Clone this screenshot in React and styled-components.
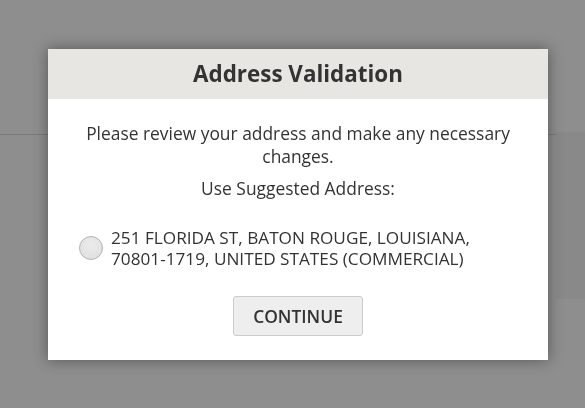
import React, { useState } from "react";
import styled, { createGlobalStyle } from "styled-components";

const GlobalStyle = createGlobalStyle`
  html, body {
    margin: 0;
    padding: 0;
    background: #8e8e8e;
    font-family: "Open Sans", "Liberation Sans", Arial, sans-serif;
    color: #333;
  }
`;

const Page = styled.div`
  height: 408px;
  padding-top: 132px;
  box-sizing: border-box;
  display: flex;
  align-items: flex-start;
  justify-content: flex-end;
  position: relative;
  &::before {
    content: "";
    position: absolute;
    left: 0;
    right: 29px;
    top: 134px;
    height: 1px;
    background: #7a7a7a;
  }
`;

const SidePanel = styled.div`
  width: 29px;
  height: 167px;
  background: #898989;
`;

const Overlay = styled.div`
  position: fixed;
  inset: 0;
  padding: 49px 0 0 48px;
`;

const Modal = styled.div`
  width: 500px;
  background: #fff;
  box-shadow: 0 0 14px rgba(0, 0, 0, 0.4);
`;

const Header = styled.div`
  height: 50px;
  background: #e8e6e2;
  display: flex;
  align-items: center;
  justify-content: center;
`;

const Title = styled.h2`
  margin: 0;
  font-size: 22.4px;
  font-weight: 700;
  color: #333;
  line-height: 1;
`;

const Body = styled.div`
  padding: 23px 20px 24px;
  display: flex;
  flex-direction: column;
  align-items: center;
`;

const Text = styled.p`
  margin: 0 0 ${(p) => p.$gap || 0}px;
  font-size: 17.4px;
  line-height: 23px;
  text-align: center;
  color: #333;
  white-space: nowrap;
`;

const Option = styled.label`
  align-self: stretch;
  display: flex;
  align-items: center;
  gap: 8px;
  padding-left: 11px;
  margin-bottom: 27px;
  cursor: pointer;
`;

const Radio = styled.span`
  flex: none;
  width: 22px;
  height: 22px;
  border-radius: 50%;
  border: 1px solid #b3b3b3;
  background: radial-gradient(circle at 50% 35%, #ececec 0%, #dddddd 100%);
  display: flex;
  align-items: center;
  justify-content: center;
  &::after {
    content: "";
    width: 10px;
    height: 10px;
    border-radius: 50%;
    background: ${(p) => (p.$checked ? "#555" : "transparent")};
  }
`;

const Address = styled.span`
  font-size: 17.2px;
  line-height: 21px;
  color: #333;
  white-space: nowrap;
`;

const Button = styled.button`
  width: 130px;
  height: 40px;
  background: #eeeeee;
  border: 1px solid #cccccc;
  border-radius: 3px;
  font-family: inherit;
  font-size: 17.4px;
  font-weight: 600;
  color: #333;
  cursor: pointer;
`;

export default function App() {
  const [checked, setChecked] = useState(false);

  return (
    <>
      <GlobalStyle />
      <Page>
        <SidePanel />
      </Page>
      <Overlay>
        <Modal>
          <Header>
            <Title>Address Validation</Title>
          </Header>
          <Body>
            <Text $gap={9}>
              Please review your address and make any necessary
              <br />
              changes.
            </Text>
            <Text $gap={27}>Use Suggested Address:</Text>
            <Option onClick={() => setChecked(!checked)}>
              <Radio $checked={checked} />
              <Address>
                251 FLORIDA ST, BATON ROUGE, LOUISIANA,
                <br />
                70801-1719, UNITED STATES (COMMERCIAL)
              </Address>
            </Option>
            <Button>CONTINUE</Button>
          </Body>
        </Modal>
      </Overlay>
    </>
  );
}
